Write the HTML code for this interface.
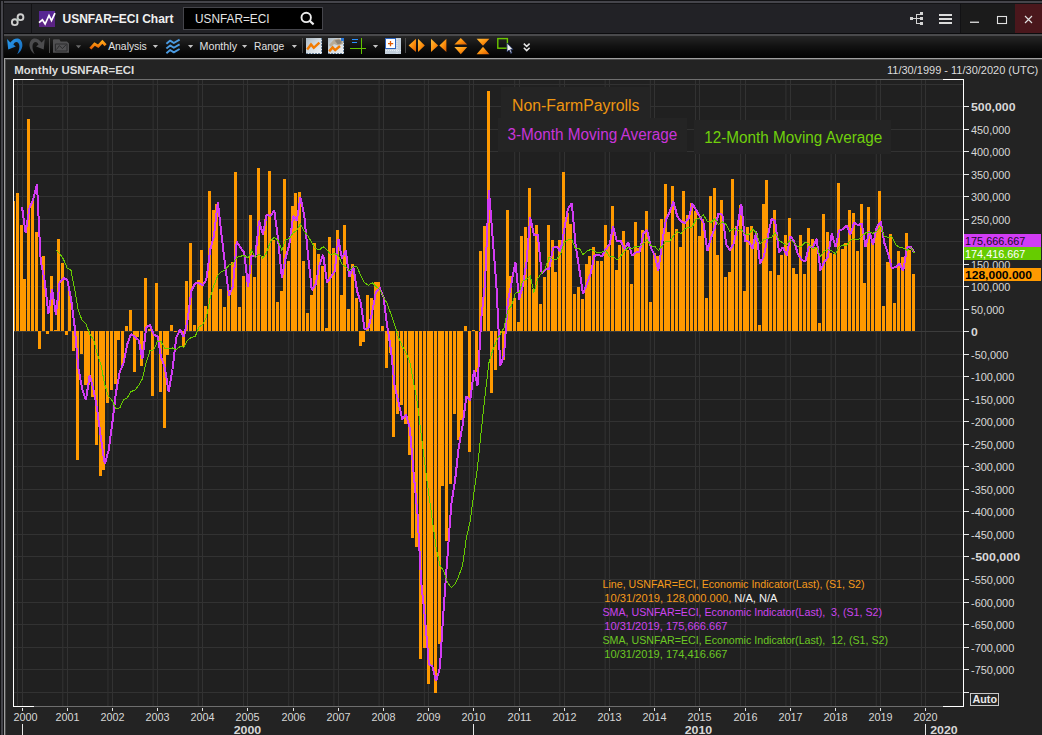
<!DOCTYPE html>
<html><head><meta charset="utf-8"><title>USNFAR=ECI Chart</title>
<style>html,body{margin:0;padding:0;background:#232323;overflow:hidden}</style></head>
<body>
<svg width="1042" height="735" viewBox="0 0 1042 735" style="display:block;font-family:'Liberation Sans',sans-serif">
<defs><linearGradient id="tb" x1="0" y1="0" x2="0" y2="1"><stop offset="0" stop-color="#262626"/><stop offset="0.5" stop-color="#111111"/><stop offset="1" stop-color="#030303"/></linearGradient><linearGradient id="og" x1="0" y1="0" x2="0" y2="1"><stop offset="0" stop-color="#ffb020"/><stop offset="1" stop-color="#e87800"/></linearGradient><clipPath id="cp"><rect x="14" y="80" width="949" height="626"/></clipPath></defs>
<rect width="1042" height="735" fill="#232323"/>
<rect x="0" y="0" width="1042" height="4" fill="#131315"/>
<rect x="1" y="1" width="1042" height="2" fill="#45454b"/>
<rect x="0" y="0" width="4" height="735" fill="#131315"/>
<rect x="1" y="1" width="2" height="735" fill="#45454b"/>
<rect x="4" y="4" width="1038" height="29" fill="#222226"/>
<rect x="31" y="4" width="1" height="29" fill="#121214"/>
<rect x="960" y="4" width="1" height="29" fill="#121214"/>
<rect x="961" y="4" width="54" height="29" fill="#1b1b1b"/>
<rect x="1015" y="4" width="27" height="29" fill="#4a171c"/>
<rect x="4" y="33" width="1038" height="1" fill="#0c0c0e"/>
<rect x="4" y="34" width="1038" height="2" fill="#4a4a4c"/>
<rect x="4" y="36" width="1038" height="21" fill="url(#tb)"/>
<rect x="4" y="57" width="1038" height="1" fill="#050505"/>
<rect x="4" y="58" width="1038" height="1" fill="#a0a0a0"/>
<rect x="4" y="58" width="1" height="677" fill="#a0a0a0"/>
<rect x="5" y="59" width="1037" height="1" fill="#4a4a4a"/>
<rect x="5" y="59" width="1" height="676" fill="#4a4a4a"/>
<g id="titlebar">
<g fill="none" stroke="#cfcfcf" stroke-width="1.9"><circle cx="20.5" cy="17.2" r="2.9"/><circle cx="14.8" cy="22.2" r="2.9"/></g>
<path d="M16.4 20.8 L18.9 18.6" stroke="#b8c8c0" stroke-width="2" fill="none"/>
<rect x="39" y="11" width="16" height="16" fill="#5b2384"/>
<rect x="39" y="11" width="16" height="8" fill="#56289a" opacity="0.7"/>
<path d="M39 22.6 L42.4 19.8 L45.1 24 L49 15.4 L51.5 20.6 L55 13.2" fill="none" stroke="#ffffff" stroke-width="1.7" stroke-linejoin="miter"/>
<text x="62.5" y="23.2" font-size="13" font-weight="bold" fill="#f0f0f0" textLength="111" lengthAdjust="spacingAndGlyphs">USNFAR=ECI Chart</text>
<rect x="183.5" y="7.5" width="139" height="22" fill="#000000" stroke="#45454b" stroke-width="1"/>
<text x="195" y="23.2" font-size="13" fill="#e4e4e4" textLength="74.5" lengthAdjust="spacingAndGlyphs">USNFAR=ECI</text>
<circle cx="306.2" cy="17.4" r="4.7" fill="none" stroke="#ececec" stroke-width="1.9"/>
<path d="M309.6 20.8 L313.6 24.4" stroke="#ececec" stroke-width="2.2" fill="none"/>
<g fill="#d4d4d4"><rect x="910" y="17" width="3" height="3"/><rect x="913" y="18" width="7" height="1"/><rect x="916" y="14" width="1" height="10"/><rect x="916" y="14" width="4" height="1"/><rect x="916" y="23" width="4" height="1"/><rect x="920" y="12" width="3" height="3"/><rect x="920" y="17" width="3" height="3"/><rect x="920" y="22" width="3" height="3"/></g>
<g fill="#dcdcdc"><rect x="939" y="14" width="13" height="2"/><rect x="939" y="18" width="13" height="2"/><rect x="939" y="22" width="13" height="2"/></g>
<rect x="970" y="21.6" width="9" height="1.3" fill="#e0e0e0"/>
<rect x="997.5" y="16.5" width="9" height="7" fill="none" stroke="#e0e0e0" stroke-width="1.1"/>
<path d="M1025 16 L1032 23 M1032 16 L1025 23" stroke="#e0e0e0" stroke-width="1.15" fill="none"/>
</g>

<g id="toolbar">
<defs>
<linearGradient id="bl" x1="0" y1="0" x2="1" y2="1"><stop offset="0" stop-color="#2a9cf0"/><stop offset="1" stop-color="#1668b8"/></linearGradient>
<linearGradient id="oz" x1="0" y1="0" x2="0" y2="1"><stop offset="0" stop-color="#ffa818"/><stop offset="1" stop-color="#e85c00"/></linearGradient>
<linearGradient id="ot" x1="0" y1="0" x2="1" y2="1"><stop offset="0" stop-color="#ffc040"/><stop offset="0.5" stop-color="#ff9410"/><stop offset="1" stop-color="#d85800"/></linearGradient>
<linearGradient id="ic" x1="0" y1="0" x2="1" y2="1"><stop offset="0" stop-color="#aab8c2"/><stop offset="0.5" stop-color="#d4dce2"/><stop offset="1" stop-color="#f0f2f4"/></linearGradient>
</defs>
<path id="undo" d="M7.1 39 L10.3 42.6 C12.5 39.5 16 37.8 18.8 38.8 C21.6 39.9 22.8 43.5 22.3 46.5 C21.8 49.8 19.8 52.6 17.2 54.2 C18.6 51.5 19.6 48.6 19.4 46 C19.2 43.6 17.8 42 16.4 42 C15 42 13.8 43.4 13.4 44.6 L15.8 46.6 L8.2 49.4 Z" fill="url(#bl)"/>
<path d="M 44.8 39.0 L 41.6 42.6 C 39.4 39.5 35.9 37.8 33.1 38.8 C 30.3 39.9 29.1 43.5 29.6 46.5 C 30.1 49.8 32.1 52.6 34.7 54.2 C 33.3 51.5 32.3 48.6 32.5 46.0 C 32.7 43.6 34.1 42.0 35.5 42.0 C 36.9 42.0 38.1 43.4 38.5 44.6 L 36.1 46.6 L 43.7 49.4 Z" fill="#4c4c4e"/>
<rect x="49" y="38" width="1" height="15" fill="#4a4a4a"/>
<path d="M53 40 L53.6 39.2 L59.4 39.2 L60.6 41.4 L67 41.4 L69 43.6 L69 52.8 L53 52.8 Z" fill="#505052"/>
<path d="M55.4 44 L67 44 L67 51 L55.4 51 Z M56.4 49.6 L59.4 45.6 L62.4 48.6 L66 44.8" fill="none" stroke="#2c2c2e" stroke-width="1"/>
<path d="M75.8 45.2 L81.2 45.2 L78.5 48.2 Z" fill="#686868"/>
<path d="M90.4 48.6 L94.6 44 L98.2 46.2 L102.4 41.8 L105.6 45.2" fill="none" stroke="url(#oz)" stroke-width="2.8" stroke-linejoin="miter" stroke-linecap="butt"/>
<text x="108.2" y="49.8" font-size="11" fill="#e2e2e2" textLength="38.6" lengthAdjust="spacingAndGlyphs">Analysis</text>
<path d="M152.8 45 L158 45 L155.4 48 Z" fill="#c4c4c4"/>
<g fill="none" stroke="#4a9ae0" stroke-width="1.9" stroke-linejoin="round"><path d="M166.4 43.8 L170.2 40.6 L173.8 43 L179.6 39.6"/><path d="M166.4 48.6 L170.2 45.4 L173.8 47.8 L179.6 44.4"/><path d="M166.4 53.2 L170.2 50 L173.8 52.4 L179.6 49"/></g>
<path d="M188 45 L193.2 45 L190.6 48 Z" fill="#c4c4c4"/>
<text x="199.6" y="49.8" font-size="11" fill="#e2e2e2" textLength="37.4" lengthAdjust="spacingAndGlyphs">Monthly</text>
<path d="M242 45 L247.2 45 L244.6 48 Z" fill="#c4c4c4"/>
<text x="254" y="49.8" font-size="11" fill="#e2e2e2" textLength="30.3" lengthAdjust="spacingAndGlyphs">Range</text>
<path d="M291.8 45 L297 45 L294.4 48 Z" fill="#c4c4c4"/>
<rect x="302" y="38" width="1" height="15" fill="#4a4a4a"/>
<rect x="306" y="38" width="16" height="16" fill="url(#ic)"/>
<path d="M321.5 38 V54 M306 53.5 H322" stroke="#7088a0" stroke-width="1" stroke-dasharray="2 1" fill="none"/>
<path d="M307.2 49.4 L311 44.4 L313.8 47.8 L319.4 42.6" fill="none" stroke="#f27a00" stroke-width="2.4"/>
<rect x="328" y="38" width="16" height="16" fill="url(#ic)"/>
<path d="M343.5 38 V54 M328 53.5 H344" stroke="#7088a0" stroke-width="1" stroke-dasharray="2 1" fill="none"/>
<path d="M329.2 51.4 L332.6 47.4 L335.2 50.2 L340 46" fill="none" stroke="#f27a00" stroke-width="2.4"/>
<path d="M329 45 L334 39.6 L339 38.6 L342.6 40.4 L342.8 44 L338 45.4 L334 44 L331 47 Z" fill="#b8ac98"/>
<path d="M334.6 40.4 L339 39.6 L341.6 41.2 L341.4 43.4 L337.6 44.2 Z" fill="#8c8478"/>
<rect x="341" y="38" width="3" height="3" fill="#2a78d8"/>
<rect x="361" y="38" width="1" height="16" fill="#62c400"/><rect x="350" y="48" width="16" height="1" fill="#62c400"/>
<rect x="352" y="39" width="6" height="1" fill="#2890ff"/><rect x="352" y="42" width="5" height="1" fill="#2890ff"/>
<path d="M372.9 45 L378.1 45 L375.5 48 Z" fill="#c4c4c4"/>
<rect x="385" y="38" width="16" height="16" fill="#c4d0dc"/>
<rect x="385.5" y="38.5" width="10" height="10" fill="#ffffff" stroke="#2c64c0" stroke-width="1"/>
<path d="M390.5 41 V46.2 M388 43.6 H393.2" stroke="#e05a00" stroke-width="1.3" fill="none"/>
<path d="M397 39 V54 M386 50.5 H401" stroke="#e8eef4" stroke-width="1" stroke-dasharray="1 1" fill="none"/>
<rect x="405" y="38" width="1" height="15" fill="#4a4a4a"/>
<g fill="url(#ot)">
<path d="M408.6 45.4 L416 38.8 L416 52 Z"/><path d="M424.8 45.4 L418 38.8 L418 52 Z"/>
<path d="M438.2 45.4 L431 38.8 L431 52 Z"/><path d="M439.4 45.4 L446.4 38.8 L446.4 52 Z"/>
<path d="M460.8 38 L467.2 44.4 L454.4 44.4 Z"/><path d="M460.8 54.2 L467.2 47 L454.4 47 Z"/>
<path d="M483 45.8 L489.4 38.8 L476.6 38.8 Z"/><path d="M483 46.8 L489.4 54.2 L476.6 54.2 Z"/>
</g>
<rect x="497.8" y="38.6" width="9.6" height="9.6" fill="none" stroke="#6cc800" stroke-width="1.4"/>
<path d="M507 43 L507 52 L509.2 50 L510.8 53.4 L512 52.8 L510.6 49.6 L513 49.4 Z" fill="#f4f4f4" stroke="#1c2c5c" stroke-width="0.8"/>
<path d="M523.8 43.6 L526.7 46.4 L529.6 43.6 M523.8 47.8 L526.7 50.6 L529.6 47.8" fill="none" stroke="#e6e6e6" stroke-width="1.5"/>
</g>

<rect x="14" y="80" width="949" height="626" fill="#202020"/>
<g fill="#323232"><rect x="14" y="692" width="949" height="1"/><rect x="14" y="669" width="949" height="1"/><rect x="14" y="647" width="949" height="1"/><rect x="14" y="624" width="949" height="1"/><rect x="14" y="602" width="949" height="1"/><rect x="14" y="579" width="949" height="1"/><rect x="14" y="556" width="949" height="1"/><rect x="14" y="534" width="949" height="1"/><rect x="14" y="511" width="949" height="1"/><rect x="14" y="489" width="949" height="1"/><rect x="14" y="466" width="949" height="1"/><rect x="14" y="444" width="949" height="1"/><rect x="14" y="421" width="949" height="1"/><rect x="14" y="399" width="949" height="1"/><rect x="14" y="376" width="949" height="1"/><rect x="14" y="354" width="949" height="1"/><rect x="14" y="309" width="949" height="1"/><rect x="14" y="286" width="949" height="1"/><rect x="14" y="264" width="949" height="1"/><rect x="14" y="241" width="949" height="1"/><rect x="14" y="219" width="949" height="1"/><rect x="14" y="196" width="949" height="1"/><rect x="14" y="174" width="949" height="1"/><rect x="14" y="151" width="949" height="1"/><rect x="14" y="129" width="949" height="1"/><rect x="14" y="106" width="949" height="1"/><rect x="14" y="84" width="949" height="1"/><rect x="16.99" y="80" width="1" height="626"/><rect x="22" y="80" width="1" height="626"/><rect x="62.28" y="80" width="1" height="626"/><rect x="67" y="80" width="1" height="626"/><rect x="107.45" y="80" width="1" height="626"/><rect x="112" y="80" width="1" height="626"/><rect x="152.61" y="80" width="1" height="626"/><rect x="157" y="80" width="1" height="626"/><rect x="197.78" y="80" width="1" height="626"/><rect x="202" y="80" width="1" height="626"/><rect x="243.07" y="80" width="1" height="626"/><rect x="247" y="80" width="1" height="626"/><rect x="288.23" y="80" width="1" height="626"/><rect x="293" y="80" width="1" height="626"/><rect x="333.40" y="80" width="1" height="626"/><rect x="338" y="80" width="1" height="626"/><rect x="378.56" y="80" width="1" height="626"/><rect x="383" y="80" width="1" height="626"/><rect x="423.85" y="80" width="1" height="626"/><rect x="428" y="80" width="1" height="626"/><rect x="469.02" y="80" width="1" height="626"/><rect x="473" y="80" width="1" height="626"/><rect x="514.18" y="80" width="1" height="626"/><rect x="519" y="80" width="1" height="626"/><rect x="559.35" y="80" width="1" height="626"/><rect x="564" y="80" width="1" height="626"/><rect x="604.64" y="80" width="1" height="626"/><rect x="609" y="80" width="1" height="626"/><rect x="649.80" y="80" width="1" height="626"/><rect x="654" y="80" width="1" height="626"/><rect x="694.97" y="80" width="1" height="626"/><rect x="699" y="80" width="1" height="626"/><rect x="740.13" y="80" width="1" height="626"/><rect x="745" y="80" width="1" height="626"/><rect x="785.42" y="80" width="1" height="626"/><rect x="790" y="80" width="1" height="626"/><rect x="830.59" y="80" width="1" height="626"/><rect x="835" y="80" width="1" height="626"/><rect x="875.75" y="80" width="1" height="626"/><rect x="880" y="80" width="1" height="626"/><rect x="920.92" y="80" width="1" height="626"/><rect x="925" y="80" width="1" height="626"/></g>
<rect x="14" y="331" width="949" height="1" fill="#3c3c3c"/>
<g fill="#ff9900" clip-path="url(#cp)"><rect x="12" y="201" width="3" height="130"/><rect x="16" y="193" width="3" height="138"/><rect x="20" y="225" width="3" height="106"/><rect x="23" y="279" width="3" height="52"/><rect x="27" y="119" width="3" height="212"/><rect x="31" y="201" width="3" height="130"/><rect x="35" y="232" width="3" height="99"/><rect x="38" y="331" width="3" height="18"/><rect x="42" y="256" width="3" height="75"/><rect x="46" y="331" width="3" height="3"/><rect x="50" y="276" width="3" height="55"/><rect x="54" y="330" width="3" height="1"/><rect x="57" y="239" width="3" height="92"/><rect x="61" y="263" width="3" height="68"/><rect x="65" y="331" width="3" height="4"/><rect x="68" y="291" width="3" height="40"/><rect x="72" y="331" width="3" height="20"/><rect x="76" y="331" width="3" height="129"/><rect x="80" y="331" width="3" height="23"/><rect x="84" y="331" width="3" height="54"/><rect x="87" y="331" width="3" height="54"/><rect x="91" y="331" width="3" height="66"/><rect x="95" y="331" width="3" height="114"/><rect x="99" y="331" width="3" height="145"/><rect x="102" y="331" width="3" height="139"/><rect x="106" y="331" width="3" height="72"/><rect x="110" y="331" width="3" height="59"/><rect x="114" y="331" width="3" height="53"/><rect x="117" y="331" width="3" height="9"/><rect x="121" y="331" width="3" height="34"/><rect x="125" y="326" width="3" height="5"/><rect x="129" y="310" width="3" height="21"/><rect x="133" y="331" width="3" height="41"/><rect x="136" y="331" width="3" height="6"/><rect x="140" y="331" width="3" height="35"/><rect x="144" y="278" width="3" height="53"/><rect x="148" y="329" width="3" height="2"/><rect x="151" y="331" width="3" height="65"/><rect x="155" y="283" width="3" height="48"/><rect x="159" y="331" width="3" height="61"/><rect x="163" y="331" width="3" height="97"/><rect x="166" y="331" width="3" height="24"/><rect x="170" y="325" width="3" height="6"/><rect x="174" y="331" width="3" height="1"/><rect x="178" y="330" width="3" height="1"/><rect x="182" y="331" width="3" height="16"/><rect x="185" y="281" width="3" height="50"/><rect x="189" y="243" width="3" height="88"/><rect x="193" y="325" width="3" height="6"/><rect x="197" y="280" width="3" height="51"/><rect x="200" y="250" width="3" height="81"/><rect x="204" y="306" width="3" height="25"/><rect x="208" y="191" width="3" height="140"/><rect x="212" y="210" width="3" height="121"/><rect x="215" y="204" width="3" height="127"/><rect x="219" y="289" width="3" height="42"/><rect x="223" y="307" width="3" height="24"/><rect x="227" y="290" width="3" height="41"/><rect x="231" y="262" width="3" height="69"/><rect x="234" y="172" width="3" height="159"/><rect x="238" y="307" width="3" height="24"/><rect x="242" y="276" width="3" height="55"/><rect x="246" y="275" width="3" height="56"/><rect x="249" y="215" width="3" height="116"/><rect x="253" y="277" width="3" height="54"/><rect x="257" y="168" width="3" height="163"/><rect x="261" y="256" width="3" height="75"/><rect x="264" y="219" width="3" height="112"/><rect x="268" y="171" width="3" height="160"/><rect x="272" y="240" width="3" height="91"/><rect x="276" y="302" width="3" height="29"/><rect x="280" y="291" width="3" height="40"/><rect x="283" y="179" width="3" height="152"/><rect x="287" y="261" width="3" height="70"/><rect x="291" y="206" width="3" height="125"/><rect x="294" y="193" width="3" height="138"/><rect x="298" y="192" width="3" height="139"/><rect x="302" y="261" width="3" height="70"/><rect x="306" y="313" width="3" height="18"/><rect x="310" y="295" width="3" height="36"/><rect x="313" y="243" width="3" height="88"/><rect x="317" y="254" width="3" height="77"/><rect x="321" y="266" width="3" height="65"/><rect x="325" y="328" width="3" height="3"/><rect x="328" y="237" width="3" height="94"/><rect x="332" y="248" width="3" height="83"/><rect x="336" y="230" width="3" height="101"/><rect x="340" y="295" width="3" height="36"/><rect x="343" y="225" width="3" height="106"/><rect x="347" y="309" width="3" height="22"/><rect x="351" y="264" width="3" height="67"/><rect x="355" y="298" width="3" height="33"/><rect x="359" y="331" width="3" height="15"/><rect x="362" y="331" width="3" height="11"/><rect x="366" y="295" width="3" height="36"/><rect x="370" y="298" width="3" height="33"/><rect x="374" y="282" width="3" height="49"/><rect x="377" y="282" width="3" height="49"/><rect x="381" y="326" width="3" height="5"/><rect x="385" y="331" width="3" height="37"/><rect x="389" y="331" width="3" height="22"/><rect x="392" y="331" width="3" height="106"/><rect x="396" y="331" width="3" height="83"/><rect x="400" y="331" width="3" height="74"/><rect x="404" y="331" width="3" height="93"/><rect x="408" y="331" width="3" height="124"/><rect x="411" y="331" width="3" height="207"/><rect x="415" y="331" width="3" height="216"/><rect x="419" y="331" width="3" height="328"/><rect x="423" y="331" width="3" height="317"/><rect x="427" y="331" width="3" height="353"/><rect x="430" y="331" width="3" height="334"/><rect x="434" y="331" width="3" height="362"/><rect x="438" y="331" width="3" height="313"/><rect x="441" y="331" width="3" height="155"/><rect x="445" y="331" width="3" height="210"/><rect x="449" y="331" width="3" height="153"/><rect x="453" y="331" width="3" height="83"/><rect x="457" y="331" width="3" height="109"/><rect x="460" y="331" width="3" height="89"/><rect x="464" y="326" width="3" height="5"/><rect x="468" y="331" width="3" height="121"/><rect x="472" y="330" width="3" height="1"/><rect x="475" y="331" width="3" height="41"/><rect x="479" y="251" width="3" height="80"/><rect x="483" y="226" width="3" height="105"/><rect x="487" y="91" width="3" height="240"/><rect x="490" y="331" width="3" height="62"/><rect x="494" y="331" width="3" height="39"/><rect x="498" y="331" width="3" height="3"/><rect x="502" y="331" width="3" height="29"/><rect x="506" y="210" width="3" height="121"/><rect x="509" y="276" width="3" height="55"/><rect x="513" y="298" width="3" height="33"/><rect x="517" y="322" width="3" height="9"/><rect x="520" y="236" width="3" height="95"/><rect x="524" y="227" width="3" height="104"/><rect x="528" y="188" width="3" height="143"/><rect x="532" y="289" width="3" height="42"/><rect x="535" y="225" width="3" height="106"/><rect x="539" y="304" width="3" height="27"/><rect x="543" y="277" width="3" height="54"/><rect x="547" y="225" width="3" height="106"/><rect x="551" y="240" width="3" height="91"/><rect x="554" y="272" width="3" height="59"/><rect x="558" y="240" width="3" height="91"/><rect x="562" y="172" width="3" height="159"/><rect x="566" y="213" width="3" height="118"/><rect x="569" y="224" width="3" height="107"/><rect x="573" y="294" width="3" height="37"/><rect x="577" y="287" width="3" height="44"/><rect x="581" y="299" width="3" height="32"/><rect x="585" y="264" width="3" height="67"/><rect x="588" y="256" width="3" height="75"/><rect x="592" y="247" width="3" height="84"/><rect x="596" y="261" width="3" height="70"/><rect x="600" y="261" width="3" height="70"/><rect x="604" y="225" width="3" height="106"/><rect x="607" y="246" width="3" height="85"/><rect x="611" y="206" width="3" height="125"/><rect x="615" y="270" width="3" height="61"/><rect x="618" y="245" width="3" height="86"/><rect x="622" y="231" width="3" height="100"/><rect x="626" y="250" width="3" height="81"/><rect x="630" y="284" width="3" height="47"/><rect x="634" y="222" width="3" height="109"/><rect x="637" y="248" width="3" height="83"/><rect x="641" y="230" width="3" height="101"/><rect x="645" y="211" width="3" height="120"/><rect x="649" y="302" width="3" height="29"/><rect x="653" y="253" width="3" height="78"/><rect x="656" y="256" width="3" height="75"/><rect x="660" y="219" width="3" height="112"/><rect x="664" y="184" width="3" height="147"/><rect x="667" y="232" width="3" height="99"/><rect x="671" y="186" width="3" height="145"/><rect x="675" y="229" width="3" height="102"/><rect x="679" y="247" width="3" height="84"/><rect x="682" y="191" width="3" height="140"/><rect x="686" y="215" width="3" height="116"/><rect x="690" y="203" width="3" height="128"/><rect x="694" y="211" width="3" height="120"/><rect x="698" y="236" width="3" height="95"/><rect x="701" y="219" width="3" height="112"/><rect x="705" y="298" width="3" height="33"/><rect x="709" y="196" width="3" height="135"/><rect x="713" y="188" width="3" height="143"/><rect x="716" y="255" width="3" height="76"/><rect x="720" y="200" width="3" height="131"/><rect x="724" y="277" width="3" height="54"/><rect x="728" y="272" width="3" height="59"/><rect x="731" y="179" width="3" height="152"/><rect x="735" y="226" width="3" height="105"/><rect x="739" y="205" width="3" height="126"/><rect x="743" y="291" width="3" height="40"/><rect x="746" y="227" width="3" height="104"/><rect x="750" y="226" width="3" height="105"/><rect x="754" y="239" width="3" height="92"/><rect x="758" y="325" width="3" height="6"/><rect x="762" y="204" width="3" height="127"/><rect x="765" y="180" width="3" height="151"/><rect x="769" y="271" width="3" height="60"/><rect x="773" y="210" width="3" height="121"/><rect x="777" y="275" width="3" height="56"/><rect x="780" y="255" width="3" height="76"/><rect x="784" y="235" width="3" height="96"/><rect x="788" y="218" width="3" height="113"/><rect x="792" y="268" width="3" height="63"/><rect x="795" y="274" width="3" height="57"/><rect x="799" y="235" width="3" height="96"/><rect x="803" y="274" width="3" height="57"/><rect x="807" y="228" width="3" height="103"/><rect x="811" y="239" width="3" height="92"/><rect x="814" y="247" width="3" height="84"/><rect x="818" y="323" width="3" height="8"/><rect x="822" y="214" width="3" height="117"/><rect x="826" y="232" width="3" height="99"/><rect x="829" y="253" width="3" height="78"/><rect x="833" y="254" width="3" height="77"/><rect x="837" y="183" width="3" height="148"/><rect x="841" y="249" width="3" height="82"/><rect x="844" y="243" width="3" height="88"/><rect x="848" y="210" width="3" height="121"/><rect x="852" y="213" width="3" height="118"/><rect x="856" y="251" width="3" height="80"/><rect x="860" y="204" width="3" height="127"/><rect x="863" y="283" width="3" height="48"/><rect x="867" y="207" width="3" height="124"/><rect x="871" y="243" width="3" height="88"/><rect x="875" y="229" width="3" height="102"/><rect x="878" y="191" width="3" height="140"/><rect x="882" y="306" width="3" height="25"/><rect x="886" y="262" width="3" height="69"/><rect x="889" y="234" width="3" height="97"/><rect x="893" y="303" width="3" height="28"/><rect x="897" y="251" width="3" height="80"/><rect x="901" y="257" width="3" height="74"/><rect x="905" y="233" width="3" height="98"/><rect x="908" y="250" width="3" height="81"/><rect x="912" y="274" width="3" height="57"/></g>
<polyline fill="none" stroke="#d23cf5" stroke-width="2" shape-rendering="crispEdges" stroke-linejoin="bevel" transform="translate(0.8,0.5)" points="21.2,206.2 24.8,232.2 28.6,207.6 32.3,199.5 36.2,184.0 39.9,260.7 43.7,279.1 47.6,313.1 51.3,289.0 55.1,314.0 58.8,282.1 62.7,277.7 66.5,279.1 70.0,296.5 73.8,325.6 77.5,367.0 81.3,388.1 85.1,399.6 88.9,374.8 92.7,389.1 96.4,408.9 100.3,439.2 104.0,463.7 107.8,449.9 111.7,421.1 115.1,392.4 119.0,371.2 122.7,362.8 126.5,343.6 130.2,333.7 134.1,336.3 137.9,339.7 141.6,358.5 145.4,327.1 149.2,324.5 153.0,334.3 156.8,336.0 160.3,356.8 164.1,367.5 167.8,391.4 171.7,369.0 175.4,337.2 179.2,329.2 183.1,336.6 186.8,319.4 190.6,290.2 194.3,282.8 198.2,282.5 202.0,284.9 205.6,278.8 209.4,249.2 213.1,235.7 217.0,201.7 220.7,234.2 224.5,266.4 228.3,295.0 232.1,286.1 235.9,241.2 239.6,247.1 243.4,251.9 247.3,286.3 250.7,255.5 254.6,255.8 258.3,220.2 262.1,233.9 265.8,214.3 269.7,215.4 273.5,210.0 277.2,237.8 281.1,277.7 284.8,257.4 288.6,243.8 292.4,215.4 295.9,220.1 299.7,197.1 303.5,215.2 307.3,255.3 311.0,289.7 314.8,284.0 318.7,264.2 322.4,254.3 326.2,282.4 329.9,276.7 333.8,270.9 337.6,238.4 341.1,257.9 344.9,250.1 348.6,276.5 352.5,266.0 356.2,290.2 360.0,302.5 363.8,328.6 367.6,327.8 371.4,311.6 375.1,291.7 378.9,287.3 382.8,296.9 386.4,325.6 390.2,349.3 393.9,386.2 397.7,401.6 401.5,418.8 405.3,414.3 409.1,428.0 412.8,472.4 416.7,513.7 420.4,581.6 424.2,618.2 428.1,663.5 431.5,665.8 435.4,680.5 439.1,667.3 442.9,607.4 446.6,556.8 450.5,503.7 454.3,479.8 458.0,446.2 461.8,424.8 465.6,395.6 469.4,399.8 473.2,369.7 476.7,384.9 480.5,317.6 484.2,282.8 488.1,189.3 491.8,236.7 495.6,284.8 499.5,365.5 503.2,354.6 507.0,301.3 510.7,282.2 514.6,261.5 518.4,298.9 521.9,285.5 525.7,261.8 529.4,217.0 533.2,234.5 537.0,234.0 540.8,272.7 544.6,269.0 548.3,268.8 552.2,247.5 555.9,245.9 559.7,251.0 563.6,228.2 567.1,208.3 571.0,202.9 574.7,243.8 578.5,268.5 582.2,293.6 586.1,283.4 589.9,272.9 593.6,255.3 597.5,254.3 601.2,255.9 605.0,248.7 608.8,243.9 612.3,225.8 616.1,240.8 619.9,240.3 623.7,248.6 627.4,241.8 631.2,254.9 635.1,252.0 638.8,251.3 642.6,233.3 646.3,229.5 650.2,247.5 654.0,255.2 657.5,270.2 661.3,242.6 665.0,219.6 668.9,211.5 672.6,200.7 676.4,215.7 680.2,220.8 684.0,222.5 687.8,217.8 691.5,203.1 695.3,209.5 699.2,216.4 702.6,221.7 706.5,250.7 710.2,237.5 714.0,227.3 717.7,213.1 721.6,214.3 725.4,244.1 729.1,249.8 733.0,242.9 736.7,225.8 740.5,203.4 744.3,240.8 747.9,241.1 751.8,248.0 755.5,230.6 759.3,263.4 763.0,256.1 766.9,236.4 770.7,218.4 774.4,220.5 778.2,252.0 782.0,246.6 785.8,254.9 789.6,236.0 793.1,240.2 796.9,253.2 800.6,259.1 804.5,261.0 808.2,245.7 812.0,247.1 815.9,238.2 819.6,269.9 823.4,261.5 827.1,256.5 831.0,233.1 834.8,246.5 838.3,230.0 842.1,228.8 845.8,225.0 849.6,234.0 853.4,222.0 857.2,224.7 861.0,222.9 864.7,246.0 868.6,231.2 872.3,244.1 876.1,226.2 880.0,221.0 883.4,242.0 887.3,253.1 891.0,267.5 894.8,266.6 898.5,262.8 902.4,270.3 906.2,246.8 909.9,246.5 913.7,252.2"/>
<polyline fill="none" stroke="#66cc00" stroke-width="1" shape-rendering="crispEdges" transform="translate(0.8,0.5)" points="55.1,249.7 58.8,252.9 62.7,258.7 66.5,267.9 70.0,268.9 73.8,288.2 77.5,309.8 81.3,319.9 85.1,323.0 88.9,333.7 92.7,338.9 96.4,353.0 100.3,365.0 104.0,384.3 107.8,396.0 111.7,400.5 115.1,408.3 119.0,407.4 122.7,399.5 126.5,397.2 130.2,390.9 134.1,389.9 137.9,384.9 141.6,378.3 145.4,361.8 149.2,350.1 153.0,349.4 156.8,340.5 160.3,341.2 164.1,348.5 167.8,347.7 171.7,347.5 175.4,349.4 179.2,345.9 183.1,346.7 186.8,339.6 190.6,336.7 194.3,336.3 198.2,326.6 202.0,323.9 205.6,316.8 209.4,297.1 213.1,285.0 217.0,275.0 220.7,271.3 224.5,269.3 228.3,264.6 232.1,263.0 235.9,257.1 239.6,255.6 243.4,255.3 247.3,257.4 250.7,249.8 254.6,257.0 258.3,253.5 262.1,257.8 265.8,252.0 269.7,240.8 273.5,236.6 277.2,239.9 281.1,249.9 284.8,239.2 288.6,237.9 292.4,232.2 295.9,230.3 299.7,223.2 303.5,230.9 307.3,235.7 311.0,242.1 314.8,248.1 318.7,249.3 322.4,246.2 326.2,249.3 329.9,254.1 333.8,253.0 337.6,255.0 341.1,263.5 344.9,266.3 348.6,270.3 352.5,266.2 356.2,266.4 360.0,274.9 363.8,282.3 367.6,284.8 371.4,282.2 375.1,286.0 378.9,288.8 382.8,296.9 386.4,303.0 390.2,313.7 393.9,324.3 397.7,336.9 401.5,345.8 405.3,352.3 409.1,361.7 412.8,382.0 416.7,402.8 420.4,434.2 424.2,464.7 428.1,494.5 431.5,519.2 435.4,547.5 439.1,564.7 442.9,570.7 446.6,582.0 450.5,587.1 454.3,583.6 458.0,575.4 461.8,564.8 465.6,537.1 469.4,520.8 473.2,491.4 476.7,466.9 480.5,430.1 484.2,395.3 488.1,362.4 491.8,350.1 495.6,340.5 499.5,333.8 503.2,327.2 507.0,309.6 510.7,305.5 514.6,292.6 518.4,291.9 521.9,280.6 525.7,278.6 529.4,275.5 533.2,291.9 537.0,278.0 540.8,272.5 544.6,267.8 548.3,256.5 552.2,259.0 555.9,258.7 559.7,253.9 563.6,241.4 567.1,239.4 571.0,239.2 574.7,248.1 578.5,247.9 582.2,254.1 586.1,250.7 589.9,248.9 593.6,250.7 597.5,252.4 601.2,251.4 605.0,250.2 608.8,256.3 612.3,255.8 616.1,259.6 619.9,255.5 623.7,250.8 627.4,246.7 631.2,248.4 635.1,245.6 638.8,245.6 642.6,243.1 646.3,239.0 650.2,245.3 654.0,245.9 657.5,250.1 661.3,245.8 665.0,240.7 668.9,240.8 672.6,235.5 676.4,230.9 680.2,233.0 684.0,228.3 687.8,227.1 691.5,226.4 695.3,218.8 699.2,217.4 702.6,214.3 706.5,220.8 710.2,221.9 714.0,218.2 717.7,224.0 721.6,221.5 725.4,224.0 729.1,230.8 733.0,227.8 736.7,229.7 740.5,229.2 744.3,233.9 747.9,234.5 751.8,228.6 755.5,232.1 759.3,243.6 763.0,239.3 766.9,237.7 770.7,237.2 774.4,232.0 778.2,239.9 782.0,242.4 785.8,244.9 789.6,238.7 793.1,242.2 796.9,246.2 800.6,245.9 804.5,241.6 808.2,243.6 812.0,248.5 815.9,246.5 819.6,255.9 823.4,250.9 827.1,249.0 831.0,250.5 834.8,253.5 838.3,246.4 842.1,244.4 845.8,245.0 849.6,239.7 853.4,238.4 857.2,239.4 861.0,235.9 864.7,232.5 868.6,231.8 872.3,232.7 876.1,230.7 880.0,225.5 883.4,235.7 887.3,236.8 891.0,236.1 894.8,243.9 898.5,247.0 902.4,247.5 906.2,249.9 909.9,247.2 913.7,252.7"/>
<rect x="13" y="79" width="951" height="1" fill="#6e6e6e"/>
<rect x="13" y="706" width="951" height="1" fill="#6e6e6e"/>
<rect x="13" y="79" width="1" height="628" fill="#ffffff"/>
<rect x="963" y="79" width="1" height="628" fill="#ffffff"/>
<g fill="#ffffff"><rect x="13" y="79" width="21" height="1"/><rect x="943" y="79" width="21" height="1"/><rect x="13" y="706" width="21" height="1"/><rect x="943" y="706" width="21" height="1"/></g>
<rect x="964" y="692" width="5" height="1" fill="#e8e8e8"/><rect x="964" y="669" width="5" height="1" fill="#e8e8e8"/><text x="971" y="673.5" font-size="11" fill="#d8d8d8" textLength="43.3" lengthAdjust="spacingAndGlyphs">-750,000</text><rect x="964" y="647" width="5" height="1" fill="#e8e8e8"/><text x="971" y="651.5" font-size="11" fill="#d8d8d8" textLength="43.3" lengthAdjust="spacingAndGlyphs">-700,000</text><rect x="964" y="624" width="5" height="1" fill="#e8e8e8"/><text x="971" y="628.5" font-size="11" fill="#d8d8d8" textLength="43.3" lengthAdjust="spacingAndGlyphs">-650,000</text><rect x="964" y="602" width="5" height="1" fill="#e8e8e8"/><text x="971" y="606.5" font-size="11" fill="#d8d8d8" textLength="43.3" lengthAdjust="spacingAndGlyphs">-600,000</text><rect x="964" y="579" width="5" height="1" fill="#e8e8e8"/><text x="971" y="583.5" font-size="11" fill="#d8d8d8" textLength="43.3" lengthAdjust="spacingAndGlyphs">-550,000</text><rect x="964" y="556" width="5" height="1" fill="#e8e8e8"/><text x="971" y="560.5" font-size="11" font-weight="bold" fill="#d8d8d8" textLength="49.1" lengthAdjust="spacingAndGlyphs">-500,000</text><rect x="964" y="534" width="5" height="1" fill="#e8e8e8"/><text x="971" y="538.5" font-size="11" fill="#d8d8d8" textLength="43.3" lengthAdjust="spacingAndGlyphs">-450,000</text><rect x="964" y="511" width="5" height="1" fill="#e8e8e8"/><text x="971" y="515.5" font-size="11" fill="#d8d8d8" textLength="43.3" lengthAdjust="spacingAndGlyphs">-400,000</text><rect x="964" y="489" width="5" height="1" fill="#e8e8e8"/><text x="971" y="493.5" font-size="11" fill="#d8d8d8" textLength="43.3" lengthAdjust="spacingAndGlyphs">-350,000</text><rect x="964" y="466" width="5" height="1" fill="#e8e8e8"/><text x="971" y="470.5" font-size="11" fill="#d8d8d8" textLength="43.3" lengthAdjust="spacingAndGlyphs">-300,000</text><rect x="964" y="444" width="5" height="1" fill="#e8e8e8"/><text x="971" y="448.5" font-size="11" fill="#d8d8d8" textLength="43.3" lengthAdjust="spacingAndGlyphs">-250,000</text><rect x="964" y="421" width="5" height="1" fill="#e8e8e8"/><text x="971" y="425.5" font-size="11" fill="#d8d8d8" textLength="43.3" lengthAdjust="spacingAndGlyphs">-200,000</text><rect x="964" y="399" width="5" height="1" fill="#e8e8e8"/><text x="971" y="403.5" font-size="11" fill="#d8d8d8" textLength="43.3" lengthAdjust="spacingAndGlyphs">-150,000</text><rect x="964" y="376" width="5" height="1" fill="#e8e8e8"/><text x="971" y="380.5" font-size="11" fill="#d8d8d8" textLength="43.3" lengthAdjust="spacingAndGlyphs">-100,000</text><rect x="964" y="354" width="5" height="1" fill="#e8e8e8"/><text x="971" y="358.5" font-size="11" fill="#d8d8d8" textLength="37.3" lengthAdjust="spacingAndGlyphs">-50,000</text><rect x="964" y="331" width="5" height="1" fill="#e8e8e8"/><text x="971" y="335.5" font-size="11" font-weight="bold" fill="#d8d8d8" textLength="6.8" lengthAdjust="spacingAndGlyphs">0</text><rect x="964" y="309" width="5" height="1" fill="#e8e8e8"/><text x="971" y="313.5" font-size="11" fill="#d8d8d8" textLength="33.3" lengthAdjust="spacingAndGlyphs">50,000</text><rect x="964" y="286" width="5" height="1" fill="#e8e8e8"/><text x="971" y="290.5" font-size="11" fill="#d8d8d8" textLength="39.3" lengthAdjust="spacingAndGlyphs">100,000</text><rect x="964" y="264" width="5" height="1" fill="#e8e8e8"/><text x="971" y="268.5" font-size="11" fill="#d8d8d8" textLength="39.3" lengthAdjust="spacingAndGlyphs">150,000</text><rect x="964" y="241" width="5" height="1" fill="#e8e8e8"/><text x="971" y="245.5" font-size="11" fill="#d8d8d8" textLength="39.3" lengthAdjust="spacingAndGlyphs">200,000</text><rect x="964" y="219" width="5" height="1" fill="#e8e8e8"/><text x="971" y="223.5" font-size="11" fill="#d8d8d8" textLength="39.3" lengthAdjust="spacingAndGlyphs">250,000</text><rect x="964" y="196" width="5" height="1" fill="#e8e8e8"/><text x="971" y="200.5" font-size="11" fill="#d8d8d8" textLength="39.3" lengthAdjust="spacingAndGlyphs">300,000</text><rect x="964" y="174" width="5" height="1" fill="#e8e8e8"/><text x="971" y="178.5" font-size="11" fill="#d8d8d8" textLength="39.3" lengthAdjust="spacingAndGlyphs">350,000</text><rect x="964" y="151" width="5" height="1" fill="#e8e8e8"/><text x="971" y="155.5" font-size="11" fill="#d8d8d8" textLength="39.3" lengthAdjust="spacingAndGlyphs">400,000</text><rect x="964" y="129" width="5" height="1" fill="#e8e8e8"/><text x="971" y="133.5" font-size="11" fill="#d8d8d8" textLength="39.3" lengthAdjust="spacingAndGlyphs">450,000</text><rect x="964" y="106" width="5" height="1" fill="#e8e8e8"/><text x="971" y="110.5" font-size="11" font-weight="bold" fill="#d8d8d8" textLength="44.5" lengthAdjust="spacingAndGlyphs">500,000</text>

<rect x="22" y="708" width="1" height="3" fill="#e8e8e8"/><text x="13.5" y="721" font-size="11" fill="#d8d8d8" textLength="24" lengthAdjust="spacingAndGlyphs">2000</text><rect x="67" y="708" width="1" height="3" fill="#e8e8e8"/><text x="55.5" y="721" font-size="11" fill="#d8d8d8" textLength="24" lengthAdjust="spacingAndGlyphs">2001</text><rect x="112" y="708" width="1" height="3" fill="#e8e8e8"/><text x="100.5" y="721" font-size="11" fill="#d8d8d8" textLength="24" lengthAdjust="spacingAndGlyphs">2002</text><rect x="157" y="708" width="1" height="3" fill="#e8e8e8"/><text x="145.5" y="721" font-size="11" fill="#d8d8d8" textLength="24" lengthAdjust="spacingAndGlyphs">2003</text><rect x="202" y="708" width="1" height="3" fill="#e8e8e8"/><text x="190.5" y="721" font-size="11" fill="#d8d8d8" textLength="24" lengthAdjust="spacingAndGlyphs">2004</text><rect x="247" y="708" width="1" height="3" fill="#e8e8e8"/><text x="235.5" y="721" font-size="11" fill="#d8d8d8" textLength="24" lengthAdjust="spacingAndGlyphs">2005</text><rect x="293" y="708" width="1" height="3" fill="#e8e8e8"/><text x="281.5" y="721" font-size="11" fill="#d8d8d8" textLength="24" lengthAdjust="spacingAndGlyphs">2006</text><rect x="338" y="708" width="1" height="3" fill="#e8e8e8"/><text x="326.5" y="721" font-size="11" fill="#d8d8d8" textLength="24" lengthAdjust="spacingAndGlyphs">2007</text><rect x="383" y="708" width="1" height="3" fill="#e8e8e8"/><text x="371.5" y="721" font-size="11" fill="#d8d8d8" textLength="24" lengthAdjust="spacingAndGlyphs">2008</text><rect x="428" y="708" width="1" height="3" fill="#e8e8e8"/><text x="416.5" y="721" font-size="11" fill="#d8d8d8" textLength="24" lengthAdjust="spacingAndGlyphs">2009</text><rect x="473" y="708" width="1" height="3" fill="#e8e8e8"/><text x="461.5" y="721" font-size="11" fill="#d8d8d8" textLength="24" lengthAdjust="spacingAndGlyphs">2010</text><rect x="519" y="708" width="1" height="3" fill="#e8e8e8"/><text x="507.5" y="721" font-size="11" fill="#d8d8d8" textLength="24" lengthAdjust="spacingAndGlyphs">2011</text><rect x="564" y="708" width="1" height="3" fill="#e8e8e8"/><text x="552.5" y="721" font-size="11" fill="#d8d8d8" textLength="24" lengthAdjust="spacingAndGlyphs">2012</text><rect x="609" y="708" width="1" height="3" fill="#e8e8e8"/><text x="597.5" y="721" font-size="11" fill="#d8d8d8" textLength="24" lengthAdjust="spacingAndGlyphs">2013</text><rect x="654" y="708" width="1" height="3" fill="#e8e8e8"/><text x="642.5" y="721" font-size="11" fill="#d8d8d8" textLength="24" lengthAdjust="spacingAndGlyphs">2014</text><rect x="699" y="708" width="1" height="3" fill="#e8e8e8"/><text x="687.5" y="721" font-size="11" fill="#d8d8d8" textLength="24" lengthAdjust="spacingAndGlyphs">2015</text><rect x="745" y="708" width="1" height="3" fill="#e8e8e8"/><text x="733.5" y="721" font-size="11" fill="#d8d8d8" textLength="24" lengthAdjust="spacingAndGlyphs">2016</text><rect x="790" y="708" width="1" height="3" fill="#e8e8e8"/><text x="778.5" y="721" font-size="11" fill="#d8d8d8" textLength="24" lengthAdjust="spacingAndGlyphs">2017</text><rect x="835" y="708" width="1" height="3" fill="#e8e8e8"/><text x="823.5" y="721" font-size="11" fill="#d8d8d8" textLength="24" lengthAdjust="spacingAndGlyphs">2018</text><rect x="880" y="708" width="1" height="3" fill="#e8e8e8"/><text x="868.5" y="721" font-size="11" fill="#d8d8d8" textLength="24" lengthAdjust="spacingAndGlyphs">2019</text><rect x="925" y="708" width="1" height="3" fill="#e8e8e8"/><text x="913.5" y="721" font-size="11" fill="#d8d8d8" textLength="24" lengthAdjust="spacingAndGlyphs">2020</text>
<rect x="22" y="724" width="1" height="11" fill="#e8e8e8"/>
<text x="233.7" y="734" font-size="11" font-weight="bold" fill="#d8d8d8" textLength="27.6" lengthAdjust="spacingAndGlyphs">2000</text>
<rect x="473" y="724" width="1" height="11" fill="#e8e8e8"/>
<text x="684.7" y="734" font-size="11" font-weight="bold" fill="#d8d8d8" textLength="27.6" lengthAdjust="spacingAndGlyphs">2010</text>
<rect x="925" y="724" width="1" height="11" fill="#e8e8e8"/>
<text x="930.2" y="734" font-size="11" font-weight="bold" fill="#d8d8d8" textLength="27.6" lengthAdjust="spacingAndGlyphs">2020</text>
<g id="annot">
<text x="14.3" y="74" font-size="11" font-weight="bold" fill="#dcdcdc" textLength="120" lengthAdjust="spacingAndGlyphs">Monthly USNFAR=ECI</text>
<text x="887" y="74" font-size="11" fill="#dcdcdc" textLength="151.3" lengthAdjust="spacingAndGlyphs">11/30/1999 - 11/30/2020 (UTC)</text>
<rect x="501" y="87" width="149" height="31" fill="#242424"/>
<rect x="498" y="118" width="189" height="34" fill="#242424"/>
<rect x="694" y="120" width="197" height="34" fill="#242424"/>
<text x="512" y="110.8" font-size="16" fill="#ee9611" textLength="127.4" lengthAdjust="spacingAndGlyphs">Non-FarmPayrolls</text>
<text x="507.4" y="140.3" font-size="16" fill="#c935da" textLength="170" lengthAdjust="spacingAndGlyphs">3-Month Moving Average</text>
<text x="704.3" y="143" font-size="16" fill="#70d00c" textLength="178" lengthAdjust="spacingAndGlyphs">12-Month Moving Average</text>
<g font-size="11">
<text x="602.5" y="588" fill="#f59a1c" textLength="262" lengthAdjust="spacingAndGlyphs">Line, USNFAR=ECI, Economic Indicator(Last), (S1, S2)</text>
<text x="604.3" y="602" fill="#f59a1c" textLength="127" lengthAdjust="spacingAndGlyphs">10/31/2019, 128,000.000,</text>
<text x="734.3" y="602" fill="#f4f4f4" textLength="43.2" lengthAdjust="spacingAndGlyphs">N/A, N/A</text>
<text x="602.5" y="616" fill="#cc44ee" textLength="279.5" lengthAdjust="spacingAndGlyphs">SMA, USNFAR=ECI, Economic Indicator(Last),&#160; 3, (S1, S2)</text>
<text x="604.3" y="630" fill="#cc44ee" textLength="123.2" lengthAdjust="spacingAndGlyphs">10/31/2019, 175,666.667</text>
<text x="602.5" y="644" fill="#6cc824" textLength="285.5" lengthAdjust="spacingAndGlyphs">SMA, USNFAR=ECI, Economic Indicator(Last),&#160; 12, (S1, S2)</text>
<text x="604.3" y="658" fill="#6cc824" textLength="123.2" lengthAdjust="spacingAndGlyphs">10/31/2019, 174,416.667</text>
</g>
<rect x="964" y="234" width="77" height="13" fill="#d23cf5"/>
<rect x="964" y="247" width="77" height="13" fill="#66cc00"/>
<rect x="964" y="268" width="77" height="13" fill="#ff9900"/>
<text x="965" y="244.5" font-size="11" fill="#160a24" textLength="60.4" lengthAdjust="spacingAndGlyphs">175,666.667</text>
<text x="965" y="257.5" font-size="11" fill="#ffffff" textLength="60.4" lengthAdjust="spacingAndGlyphs">174,416.667</text>
<text x="965" y="279" font-size="11" font-weight="bold" fill="#000000" textLength="67" lengthAdjust="spacingAndGlyphs">128,000.000</text>
<rect x="970.5" y="693.5" width="28" height="12" fill="none" stroke="#c8c8c8" stroke-width="1"/>
<text x="972.5" y="703.2" font-size="11" font-weight="bold" fill="#e8e8e8" textLength="24.5" lengthAdjust="spacingAndGlyphs">Auto</text>
</g>

</svg>
</body></html>
